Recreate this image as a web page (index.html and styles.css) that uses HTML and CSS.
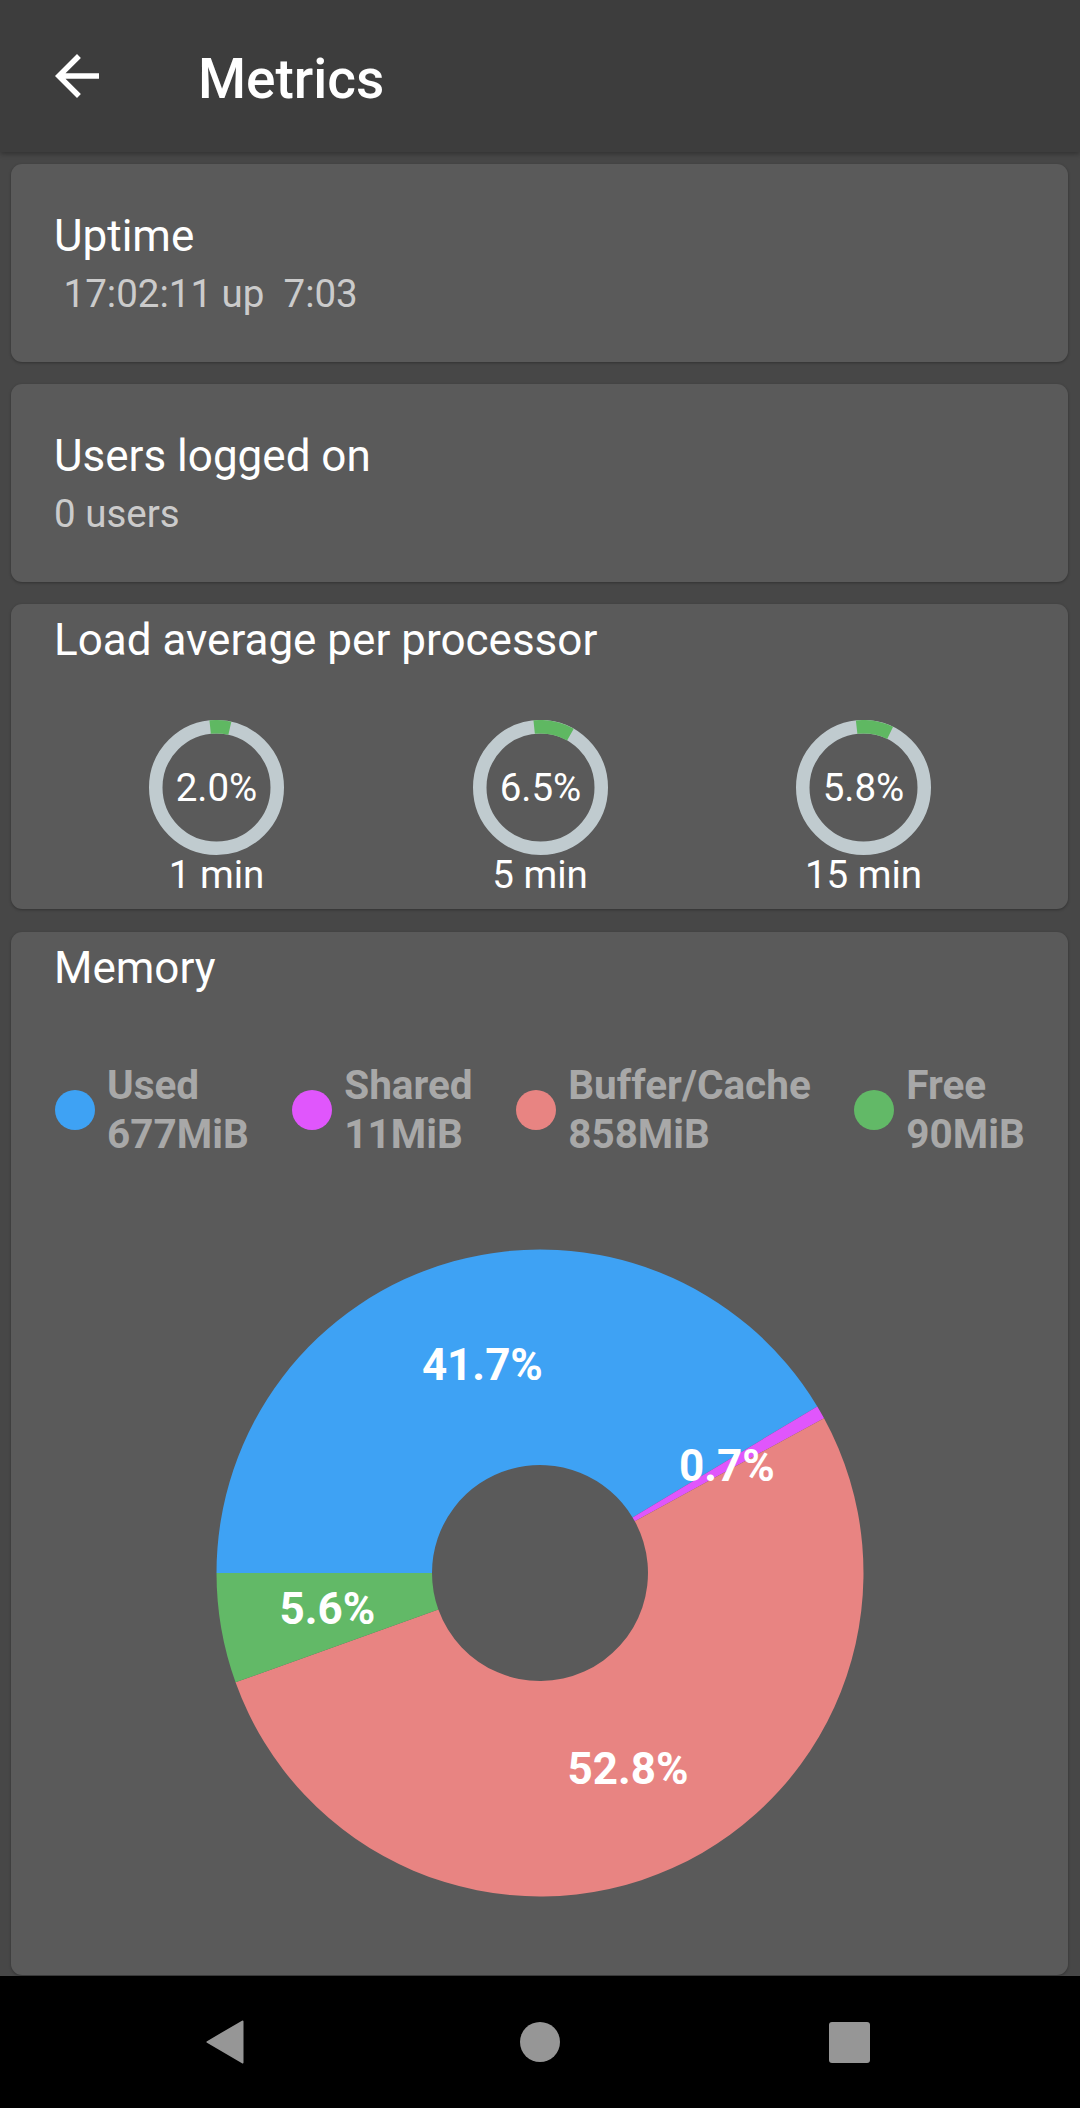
FILE: index.html
```html
<!DOCTYPE html>
<html lang="en">
<head>
<meta charset="utf-8">
<title>Metrics</title>
<link rel="stylesheet" href="styles.css">
</head>
<body>
<div class="screen">
  <header class="appbar">
    <svg class="appbar-back" viewBox="0 0 24 24" aria-label="Back"><path d="M20 11H7.83l5.59-5.59L12 4l-8 8 8 8 1.41-1.41L7.83 13H20v-2z" fill="#ffffff"/></svg>
    <h1 class="appbar-title">Metrics</h1>
  </header>

  <main class="content">
    <section class="card card-simple">
      <h2 class="card-title">Uptime</h2>
      <p class="card-value"> 17:02:11 up  7:03</p>
    </section>

    <section class="card card-simple">
      <h2 class="card-title">Users logged on</h2>
      <p class="card-value">0 users</p>
    </section>

    <section class="card card-load">
      <h2 class="card-title">Load average per processor</h2>
      <div class="gauges">
        <div class="gauge">
          <svg class="gauge-ring" viewBox="0 0 135 135">
            <circle cx="67.5" cy="67.5" r="60.75" class="ring-track"/>
            <path d="M61.15 7.08 A60.75 60.75 0 0 1 80.86 8.24" class="ring-value"/>
            <text x="67.5" y="81" class="gauge-text">2.0%</text>
          </svg>
          <div class="gauge-label">1 min</div>
        </div>
        <div class="gauge">
          <svg class="gauge-ring" viewBox="0 0 135 135">
            <circle cx="67.5" cy="67.5" r="60.75" class="ring-track"/>
            <path d="M61.15 7.08 A60.75 60.75 0 0 1 97.41 14.63" class="ring-value"/>
            <text x="67.5" y="81" class="gauge-text">6.5%</text>
          </svg>
          <div class="gauge-label">5 min</div>
        </div>
        <div class="gauge">
          <svg class="gauge-ring" viewBox="0 0 135 135">
            <circle cx="67.5" cy="67.5" r="60.75" class="ring-track"/>
            <path d="M60.62 7.14 A60.75 60.75 0 0 1 94.13 12.90" class="ring-value"/>
            <text x="67.5" y="81" class="gauge-text">5.8%</text>
          </svg>
          <div class="gauge-label">15 min</div>
        </div>
      </div>
    </section>

    <section class="card card-memory">
      <h2 class="card-title">Memory</h2>
      <ul class="legend">
        <li class="legend-item"><span class="dot dot-used"></span><span class="legend-text">Used<br>677MiB</span></li>
        <li class="legend-item"><span class="dot dot-shared"></span><span class="legend-text">Shared<br>11MiB</span></li>
        <li class="legend-item"><span class="dot dot-cache"></span><span class="legend-text">Buffer/Cache<br>858MiB</span></li>
        <li class="legend-item"><span class="dot dot-free"></span><span class="legend-text">Free<br>90MiB</span></li>
      </ul>
      <svg class="pie" viewBox="0 0 648 648">
        <path class="slice-used" d="M0.5 324 A323.5 323.5 0 0 1 601.29 157.38 L416.57 268.38 A108 108 0 0 0 216 324 Z"/>
        <path class="slice-shared" d="M601.29 157.38 A323.5 323.5 0 0 1 608.03 169.14 L418.82 272.30 A108 108 0 0 0 416.57 268.38 Z"/>
        <path class="slice-cache" d="M608.03 169.14 A323.5 323.5 0 1 1 19.53 433.32 L222.35 360.50 A108 108 0 1 0 418.82 272.30 Z"/>
        <path class="slice-free" d="M19.53 433.32 A323.5 323.5 0 0 1 0.5 324 L216 324 A108 108 0 0 0 222.35 360.50 Z"/>
        <text class="pie-label" x="266.4" y="131">41.7%</text>
        <text class="pie-label" x="511" y="232">0.7%</text>
        <text class="pie-label" x="111.5" y="375.2">5.6%</text>
        <text class="pie-label" x="412" y="535.2">52.8%</text>
      </svg>
    </section>
  </main>

  <nav class="navbar">
    <svg class="nav-back" viewBox="0 0 38 44"><path d="M36.5 1.5 L1.5 22 L36.5 42.5 Z" fill="#969696" stroke="#969696" stroke-width="2" stroke-linejoin="round"/></svg>
    <span class="nav-home"></span>
    <span class="nav-recents"></span>
  </nav>
</div>
</body>
</html>
```

FILE: styles.css
```css
* {
  box-sizing: border-box;
}

html, body {
  margin: 0;
  padding: 0;
}

body {
  width: 1080px;
  height: 2108px;
  overflow: hidden;
  background: #000000;
  font-family: Roboto, "Noto Sans", sans-serif;
  color: #ffffff;
}

.screen {
  width: 1080px;
  height: 2108px;
  display: flex;
  flex-direction: column;
}

.appbar {
  height: 152px;
  flex: 0 0 152px;
  background: #3d3d3d;
  display: flex;
  align-items: center;
  padding-left: 44px;
  box-shadow: 0 2px 5px rgba(0, 0, 0, 0.3);
  position: relative;
  z-index: 2;
}

.appbar-back {
  width: 66px;
  height: 66px;
  flex: 0 0 66px;
}

.appbar-title {
  margin: 0 0 0 88px;
  padding-top: 5px;
  font-size: 55px;
  font-weight: 500;
  line-height: 66px;
  color: #ffffff;
}

.content {
  flex: 1 1 auto;
  background: #474747;
  padding-top: 12px;
  overflow: hidden;
}

.card {
  background: #5a5a5a;
  border-radius: 11px;
  margin: 0 12px 22px 11px;
  padding: 0 42px 0 43px;
  box-shadow: 0 1px 3px rgba(0, 0, 0, 0.3);
}

.card-title {
  margin: 0;
  font-size: 44px;
  font-weight: 400;
  line-height: 56px;
  color: #ffffff;
}

.card-value {
  margin: 0;
  font-size: 38.5px;
  line-height: 60px;
  color: rgba(255, 255, 255, 0.7);
  white-space: pre;
}

.card-simple {
  height: 198px;
  padding-top: 44px;
}

.card-load {
  height: 305px;
  padding-top: 8px;
  margin-bottom: 23px;
}

.gauges {
  margin-top: 51.5px;
  display: flex;
  justify-content: center;
  gap: 188.5px;
}

.gauge {
  width: 135px;
  display: flex;
  flex-direction: column;
  align-items: center;
}

.gauge-ring {
  width: 135px;
  height: 135px;
  display: block;
}

.ring-track {
  fill: none;
  stroke: #c0cbcf;
  stroke-width: 13.5;
}

.ring-value {
  fill: none;
  stroke: #5fb862;
  stroke-width: 13.5;
}

.gauge-text {
  font-family: Roboto, "Noto Sans", sans-serif;
  font-size: 38.5px;
  fill: #ffffff;
  text-anchor: middle;
}

.gauge-label {
  font-size: 38.5px;
  line-height: 40px;
  color: #ffffff;
  white-space: nowrap;
}

.card-memory {
  height: 1043px;
  padding-top: 8px;
  margin-bottom: 0;
}

.legend {
  list-style: none;
  margin: 65px 0 0 1px;
  padding: 0;
  display: flex;
  gap: 43.5px;
}

.legend-item {
  display: flex;
  align-items: center;
  gap: 12px;
}

.dot {
  width: 40px;
  height: 40px;
  border-radius: 50%;
  flex: 0 0 40px;
}

.dot-used { background: #3ea2f4; }
.dot-shared { background: #e056fc; }
.dot-cache { background: #e88482; }
.dot-free { background: #62b967; }

.legend-text {
  font-size: 40.5px;
  font-weight: 700;
  line-height: 49px;
  color: #a8a8a8;
  white-space: nowrap;
}

.pie {
  display: block;
  width: 648px;
  height: 648px;
  margin: 90px auto 0;
}

.slice-used { fill: #3ea2f4; }
.slice-shared { fill: #e056fc; }
.slice-cache { fill: #e88482; }
.slice-free { fill: #62b967; }

.pie-label {
  font-family: Roboto, "Noto Sans", sans-serif;
  font-size: 44px;
  font-weight: 700;
  fill: #ffffff;
  text-anchor: middle;
}

.navbar {
  flex: 0 0 132px;
  height: 132px;
  background: #000000;
  display: flex;
  align-items: center;
  justify-content: center;
  padding-right: 5px;
}

.nav-back {
  width: 38px;
  height: 44px;
  display: block;
}

.nav-home {
  width: 40px;
  height: 40px;
  border-radius: 50%;
  background: #969696;
  margin-left: 276px;
}

.nav-recents {
  width: 41px;
  height: 41px;
  border-radius: 3px;
  background: #969696;
  margin-left: 269px;
}
```
